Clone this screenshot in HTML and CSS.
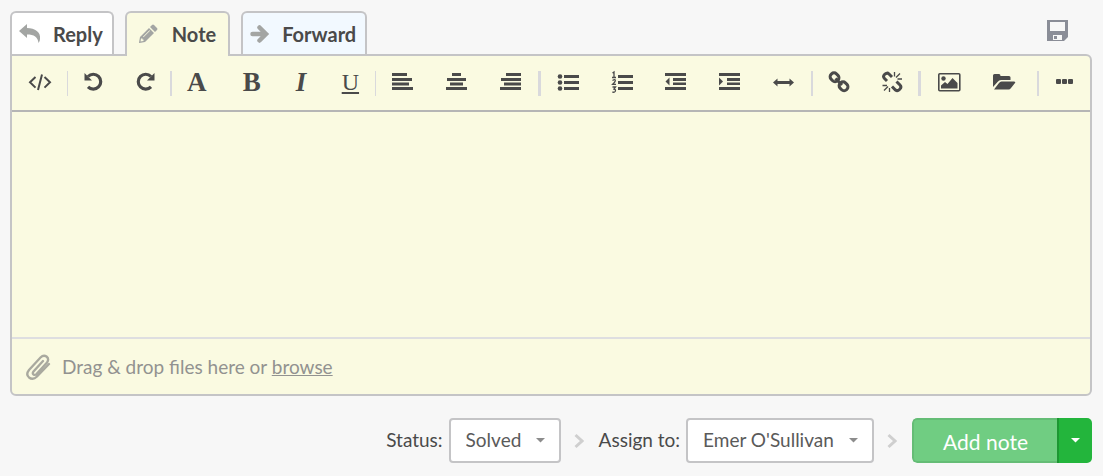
FILE: index.html
```html
<!DOCTYPE html>
<html lang="en">
<head>
  <meta charset="UTF-8" />
  <meta name="viewport" content="width=device-width, initial-scale=1" />
  <title>Ticket note</title>
  <link rel="stylesheet" href="styles.css">
</head>
<body>

  <header class="top">
    <nav class="tabs">
      <button class="tab reply" type="button">
        <svg width="22" height="20" viewBox="0 0 22 20"><path d="M0 7 8 0V4C16 4 22 8 21 15Q21 17 19.500 19C19 13 15 10.500 8 10.500V14Z"/></svg>
        Reply
      </button>
      <button class="tab note active" type="button">
        <svg width="22" height="20" viewBox="0 0 22 20"><path fill-rule="evenodd" d="M2 13 11 4 16 9 7 18 1.500 19Q1 19 1 18.500ZM3 14.500 2.500 17.500 5.500 17V15.500H4.500V14.500ZM5 12.800 11.500 6.300 12 6.800 5.500 13.300ZM12 3 14 1Q15 0 16 1L19 4Q20 5 19 6L17 8Z"/></svg>
        Note
      </button>
      <button class="tab forward" type="button">
        <svg width="20" height="20" viewBox="0 0 20 20"><path d="M2.500 10H15M9.500 3.500 16 10 9.500 16.500" fill="none" stroke="currentColor" stroke-width="4.500" stroke-linecap="round"/></svg>
        Forward
      </button>
    </nav>
    <button class="save" type="button" aria-label="Save draft">
      <svg width="21" height="21" viewBox="0 0 21 21"><path fill-rule="evenodd" d="M0 0H21V17L17 21H0ZM3 2V11H18V2ZM6 15V20H15V15ZM7 16H10V19H7Z"/></svg>
    </button>
  </header>

  <main class="editor">
    <div class="toolbar">
      <div class="group code">
        <button type="button" aria-label="Source code">
          <svg width="24" height="24" viewBox="0 0 24 24" class="line thin"><path d="M7.500 7 2 12.300 7.500 17.600M16.500 7 22 12.300 16.500 17.600M14 4.500 10 20"/></svg>
        </button>
      </div>
      <div class="group history">
        <button type="button" aria-label="Undo">
          <svg width="24" height="24" viewBox="0 0 24 24"><path d="M6 6.500A7.400 7.400 0 1 1 6 16.800" fill="none" stroke="currentColor" stroke-width="3.200"/><path d="M2.500 3V10.500H10Z"/></svg>
        </button>
        <button type="button" aria-label="Redo">
          <svg width="24" height="24" viewBox="0 0 24 24"><path d="M18 6.500A7.400 7.400 0 1 0 18 16.800" fill="none" stroke="currentColor" stroke-width="3.200"/><path d="M21.500 3V10.500H14Z"/></svg>
        </button>
      </div>
      <div class="group text">
        <button type="button" class="font" aria-label="Font">A</button>
        <button type="button" class="bold" aria-label="Bold">B</button>
        <button type="button" class="italic" aria-label="Italic">I</button>
        <button type="button" class="underline" aria-label="Underline">U</button>
      </div>
      <div class="group align">
        <button type="button" aria-label="Align left">
          <svg width="24" height="24" viewBox="0 0 24 24"><path d="M1 3H16V6H1ZM1 8H21V11H1ZM1 12.500H18V15.500H1ZM1 17H22V20H1Z"/></svg>
        </button>
        <button type="button" aria-label="Align center">
          <svg width="24" height="24" viewBox="0 0 24 24"><path d="M7 3H16V6H7ZM2 8H21V11H2ZM5 12.500H18V15.500H5ZM1 17H22V20H1Z"/></svg>
        </button>
        <button type="button" aria-label="Align right">
          <svg width="24" height="24" viewBox="0 0 24 24"><path d="M7 3H22V6H7ZM2 8H22V11H2ZM5 12.500H22V15.500H5ZM1 17H22V20H1Z"/></svg>
        </button>
      </div>
      <div class="group lists">
        <button type="button" aria-label="Bullet list">
          <svg width="24" height="24" viewBox="0 0 24 24"><circle cx="4" cy="6.500" r="2.300"/><circle cx="4" cy="12.500" r="2.300"/><circle cx="4" cy="18.500" r="2.300"/><path d="M8 5H23V8H8ZM8 11H23V14H8ZM8 17H23V20H8Z"/></svg>
        </button>
        <button type="button" aria-label="Numbered list">
          <svg width="24" height="24" viewBox="0 0 24 24"><path d="M8 5H23V8H8ZM8 11H23V14H8ZM8 17H23V20H8Z"/><path class="digits" d="M2.500 3 4 2V7.500M2 7.500H6M2.500 10.500Q5.500 8.500 5.300 10.800 5 12 2.700 14.300H6M2.500 17H5.500L4 19Q6 19.300 5.300 21.300 4.500 22.700 2.200 22"/></svg>
        </button>
        <button type="button" aria-label="Outdent">
          <svg width="24" height="24" viewBox="0 0 24 24"><path d="M1 3H22V6H1ZM9 8H22V11H9ZM9 12.500H22V15H9ZM1 17H22V20H1ZM5.500 7.500V15.500L1.500 11.500Z"/></svg>
        </button>
        <button type="button" aria-label="Indent">
          <svg width="24" height="24" viewBox="0 0 24 24"><path d="M1 3H22V6H1ZM9 8H22V11H9ZM9 12.500H22V15H9ZM1 17H22V20H1ZM1 7.500V15.500L5 11.500Z"/></svg>
        </button>
        <button type="button" aria-label="Horizontal line">
          <svg width="24" height="24" viewBox="0 0 24 24"><path d="M1 12.500 5.500 8.500V11H17.500V8.500L22 12.500 17.500 16.500V14H5.500V16.500Z"/></svg>
        </button>
      </div>
      <div class="group links">
        <button type="button" aria-label="Insert link">
          <svg width="24" height="24" viewBox="0 0 24 24" class="line"><rect x="3" y="3.500" width="9" height="7.500" rx="3.400" transform="rotate(45 7.500 7.300)"/><rect x="12" y="12.500" width="9" height="7.500" rx="3.400" transform="rotate(45 16.500 16.300)"/><path d="M8.500 8.500 15 15"/></svg>
        </button>
        <button type="button" aria-label="Remove link">
          <svg width="24" height="24" viewBox="0 0 24 24"><g class="line"><path d="M7 11 4.500 8.500Q2.500 6.500 4.500 4.500 7 2 9 4L12 7M12 16.500 15.500 20Q17.500 21.500 19.500 19.500 22 17 20 15L16.500 11.500"/></g><path class="line rays" d="M14.500 6.500V2M16 7.500 20 3.500M17.500 9H22M2.500 15.500H7M4 20.500 8 16.500M9.500 18V22"/></svg>
        </button>
      </div>
      <div class="group files">
        <button type="button" aria-label="Insert image">
          <svg width="24" height="24" viewBox="0 0 24 24"><rect x="1.800" y="3.800" width="21" height="17" rx="1" fill="none" stroke="currentColor" stroke-width="1.600"/><circle cx="6.500" cy="8.500" r="2.200"/><path d="M4 18.500V15.500L8 12 10.500 14 15.500 8 20.500 13V18.500Z"/></svg>
        </button>
        <button type="button" aria-label="Open folder">
          <svg width="24" height="24" viewBox="0 0 24 24"><path d="M1 17V5.500Q1 4 2.500 4H7Q8.500 4 8.500 6H17Q18.500 6 18.500 7.500V10H9Q7 10 5.500 12ZM2 19.500 7 13Q8 11.500 9.500 11.500H22Q24 11.500 23 13L19 18Q18 19.500 16.500 19.500Z"/></svg>
        </button>
      </div>
      <div class="group more">
        <button type="button" aria-label="More">
          <svg width="24" height="24" viewBox="0 0 24 24"><rect x="3" y="9" width="5" height="5" rx="1"/><rect x="9" y="9" width="5" height="5" rx="1"/><rect x="15" y="9" width="5" height="5" rx="1"/></svg>
        </button>
      </div>
    </div>

    <textarea class="message" aria-label="Note"></textarea>

    <div class="attach">
      <svg width="26" height="28" viewBox="0 0 26 28"><path d="M18 8 8.500 18.500Q7 20.500 8.500 21.500 10 22.500 11.500 21L22 9.500Q24.500 6 21.500 3.500 18.500 1.500 15.500 4.500L4 17Q.5 21.500 4 24.500 8 27.500 12 23.500L24 11" fill="none" stroke="currentColor" stroke-width="2.300" stroke-linecap="round"/></svg>
      <p>Drag &amp; drop files here or <a href="#">browse</a></p>
    </div>
  </main>

  <footer class="actions">
    <label for="status">Status:</label>
    <div class="select">
      <select id="status">
        <option>Solved</option>
      </select>
      <svg class="caret" width="9" height="5" viewBox="0 0 9 5"><path d="M0 0H9L4.500 4.500Z"/></svg>
    </div>
    <svg class="next" width="10" height="16" viewBox="0 0 10 16"><path d="M1.500 2 8 8 1.500 14"/></svg>
    <label for="assignee">Assign to:</label>
    <div class="select">
      <select id="assignee">
        <option>Emer O'Sullivan</option>
      </select>
      <svg class="caret" width="9" height="5" viewBox="0 0 9 5"><path d="M0 0H9L4.500 4.500Z"/></svg>
    </div>
    <svg class="next" width="10" height="16" viewBox="0 0 10 16"><path d="M1.500 2 8 8 1.500 14"/></svg>
    <div class="submit">
      <button class="add" type="button">Add note</button>
      <button class="drop" type="button" aria-label="More actions">
        <svg width="9" height="5" viewBox="0 0 9 5"><path d="M0 0H9L4.500 4.500Z"/></svg>
      </button>
    </div>
  </footer>

</body>
</html>
```
FILE: styles.css
```css
* {
  box-sizing: border-box;
}
body {
  font-family: Lato, "Open Sans", sans-serif;
  font-size: 19px;
  color: #4a4a4a;
  margin: 0;
  padding: 11px 11px 13px 10px;
  background: #f7f7f7;
}
button {
  font: inherit;
  color: inherit;
  margin: 0;
  padding: 0;
  border: none;
  background: none;
  cursor: pointer;
}
svg {
  display: block;
  flex: none;
  fill: currentColor;
}

/* tabs */
.top {
  display: flex;
  justify-content: space-between;
  align-items: flex-start;
}
.tabs {
  display: flex;
  gap: 11px;
}
.tab {
  display: flex;
  align-items: center;
  gap: 12px;
  height: 43px;
  padding: 0 9px 0 7px;
  border: 2px solid #c4c4c6;
  border-bottom: none;
  border-radius: 6px 6px 0 0;
  background: #fff;
  font-size: 20px;
  font-weight: 700;
}
.tab svg {
  color: #a3a5a3;
}
.tab.note {
  padding: 0 12px 0 11px;
  background: #fafae1;
}
.tab.active {
  position: relative;
  height: 45px;
  margin-bottom: -2px;
  padding-bottom: 2px;
}
.tab.forward {
  background: #f2f9ff;
}
.save {
  margin: 9px 24px 0 0;
  color: #8a8d97;
}

/* editor */
.editor {
  border: 2px solid #c4c4c6;
  border-radius: 0 6px 6px 6px;
  background: #fafae1;
  overflow: hidden;
}
.toolbar {
  display: flex;
  align-items: center;
  height: 56px;
  border-bottom: 2px solid #b5b5b5;
}
.group {
  display: flex;
  flex-basis: 0;
  height: 25px;
  border-right: 2px solid #d9d9dc;
}
.group button {
  display: flex;
  flex: 1;
  align-items: center;
  justify-content: center;
  padding-bottom: 2px;
}
.code {
  flex-grow: 55;
  border-right-width: 1px;
}
.history {
  flex-grow: 102;
}
.text {
  flex-grow: 203;
  border-right-width: 1px;
  font-family: "Liberation Serif", serif;
  font-size: 27px;
  font-weight: 700;
}
.text .font {
  margin-right: 6px;
}
.text .italic {
  font-style: italic;
}
.text .underline {
  font-size: 24px;
  font-weight: 400;
  text-decoration: underline;
  text-decoration-thickness: 2px;
  text-underline-offset: 2px;
}
.align {
  flex-grow: 162;
  border-right-width: 3px;
}
.lists {
  flex-grow: 270;
}
.links {
  flex-grow: 105;
  border-right-width: 3px;
}
.files {
  flex-grow: 110;
  padding-right: 6px;
}
.more {
  flex-grow: 51;
  border-right: none;
}
.line {
  fill: none;
  stroke: currentColor;
  stroke-width: 3;
}
.thin {
  stroke-width: 2;
}
.rays,
.digits {
  fill: none;
  stroke: currentColor;
  stroke-width: 1.3;
}
.message {
  display: block;
  width: 100%;
  height: 225px;
  padding: 12px 16px;
  border: none;
  outline: none;
  resize: none;
  background: transparent;
  font: inherit;
  color: inherit;
}
.attach {
  display: flex;
  align-items: center;
  gap: 11px;
  height: 57px;
  padding: 0 13px;
  border-top: 2px solid #dedee0;
  color: #929290;
}
.attach svg {
  color: #a9a99f;
}
.attach p {
  margin: 0;
}
.attach a {
  color: inherit;
}

/* status, assignee and submit */
.actions {
  display: flex;
  align-items: center;
  justify-content: flex-end;
  margin-top: 22px;
}
.actions label {
  margin-right: 6px;
  padding-bottom: 2px;
}
.select {
  position: relative;
}
.select select {
  appearance: none;
  display: block;
  height: 45px;
  padding: 0 37px 2px 15px;
  border: 2px solid #c4c4c6;
  border-radius: 4px;
  background: #fff;
  font: inherit;
  color: #5a5a5a;
}
.caret {
  position: absolute;
  top: 20px;
  right: 16px;
  color: #8c8c8c;
  pointer-events: none;
}
.next {
  margin: 0 15px 0 13px;
  fill: none;
  stroke: #cfcfcf;
  stroke-width: 3;
}
.submit {
  display: flex;
  height: 45px;
  border-radius: 5px;
  overflow: hidden;
  color: #fff;
}
.add {
  padding: 2px 29px 0;
  border: 2px solid #65bd76;
  border-right: none;
  border-radius: 5px 0 0 5px;
  background: #70cd82;
  font-size: 21px;
}
.drop {
  display: flex;
  align-items: center;
  justify-content: center;
  width: 35px;
  border-left: 2px solid #1d9733;
  background: #23b53c;
}
```
